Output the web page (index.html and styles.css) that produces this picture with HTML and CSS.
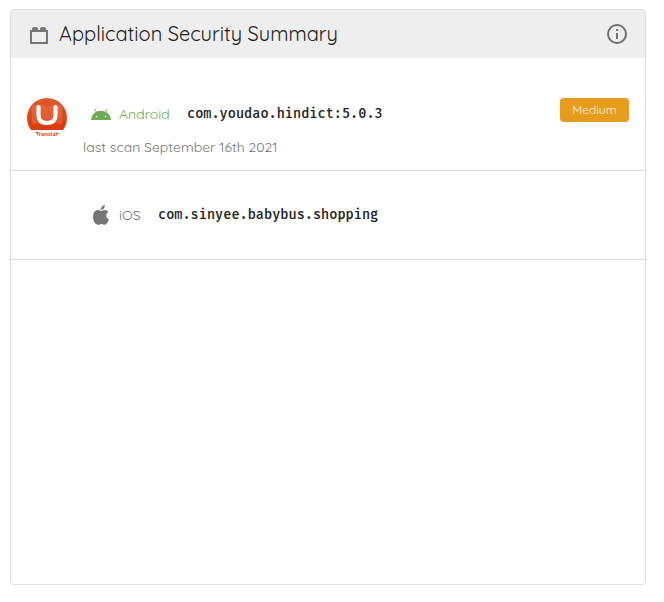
FILE: index.html
```html
<!DOCTYPE html>
<html lang="en">
<head>
<meta charset="utf-8">
<title>Application Security Summary</title>
<link rel="stylesheet" href="styles.css">
</head>
<body>
<main class="card">
  <header class="head">
    <svg class="head-icon" width="24" height="24" viewBox="0 0 24 24"><path fill="#757575" d="M19 6V5a2 2 0 0 0-2-2h-2a2 2 0 0 0-2 2v1h-2V5a2 2 0 0 0-2-2H7a2 2 0 0 0-2 2v1H3v14h18V6zm0 12H5V8h14z"/></svg>
    <h1 class="title"><span>Application Security Summary</span></h1>
    <svg class="info" width="24" height="24" viewBox="0 0 24 24"><path fill="#707070" d="M11 7h2v2h-2zm0 4h2v6h-2zm1-9a10 10 0 1 0 0 20 10 10 0 0 0 0-20zm0 18a8 8 0 1 1 0-16 8 8 0 0 1 0 16z"/></svg>
  </header>
  <section class="row scanned">
    <svg class="avatar" width="40" height="40" viewBox="0 0 40 40">
      <defs>
        <clipPath id="round"><circle cx="20" cy="20" r="20"/></clipPath>
        <linearGradient id="red" x1="0" y1="0" x2="0" y2="1"><stop offset="0" stop-color="#e0592a"/><stop offset="1" stop-color="#dc3a0b"/></linearGradient>
      </defs>
      <g clip-path="url(#round)">
        <path fill="url(#red)" d="M0 0h40v32H0z"/>
        <path fill="#f17c57" fill-opacity=".4" d="M5 8q8-3 15 1 7-4 15-1v18q-8-2-15 2-7-4-15-2z"/>
        <path fill="none" stroke="#fff" stroke-width="4.2" stroke-linecap="round" d="M11.500 9v8q0 8 8.500 8t8.500-8V9"/>
        <text class="logo-text" x="21.500" y="37.700" text-anchor="middle" textLength="26" lengthAdjust="spacingAndGlyphs">Translate</text>
      </g>
    </svg>
    <div class="details">
      <div class="app">
        <svg class="platform" width="20" height="20" viewBox="0 0 20 20"><path fill="#6fac54" d="M0 16c.3-3.700 2.100-6.500 5-8L3.300 5.200l.7-.4 1.800 2.900a11 11 0 0 1 8.400 0L16 4.800l.7.4L15 8c2.900 1.500 4.700 4.300 5 8z"/><g fill="#fff"><circle cx="5.500" cy="12.500" r=".8"/><circle cx="14.500" cy="12.500" r=".8"/></g></svg>
        <span class="name android">Android</span>
        <span class="package">com.youdao.hindict:5.0.3</span>
      </div>
      <div class="scan">last scan September 16th 2021</div>
    </div>
    <span class="badge">Medium</span>
  </section>
  <section class="row pending">
    <div class="details">
      <div class="app">
        <svg class="platform" width="20" height="20" viewBox="0 0 20 20"><path fill="#757575" d="M13.800 0c.2 2.800-1.500 4.800-4.100 4.900C9.600 2.500 11.400.4 13.800 0zM10.300 6c.9 0 2-1 3.600-1 1.500 0 2.800.8 3.500 1.900-3.200 2-2.700 6.100.6 7.300-.7 2-2.300 5.300-4.100 5.500-1.300.1-1.900-.8-3.500-.8s-2.200.8-3.500.8C4.400 19.800 2 15.800 2 11.700 2 7.300 4.300 5 6.900 5 8.400 5 9.300 6 10.300 6z"/></svg>
        <span class="name ios">iOS</span>
        <span class="package">com.sinyee.babybus.shopping</span>
      </div>
    </div>
  </section>
</main>
</body>
</html>
```
FILE: styles.css
```css
* { box-sizing: border-box; }
body {
  margin: 0;
  padding: 9px 18px 17px 10px;
  background: #fff;
  font-family: Quicksand, Lato, sans-serif;
}
.card {
  width: 636px;
  height: 576px;
  border: 1px solid #dedede;
  border-radius: 4px;
  overflow: hidden;
}
.head {
  display: flex;
  align-items: center;
  height: 48px;
  padding: 0 16px;
  background: #eee;
}
.head-icon { margin-top: 4px; }
.title {
  flex: 1;
  margin: 0 0 0 8px;
  color: #212121;
  font-size: 20px;
  line-height: 28px;
  font-weight: 400;
}
.row {
  display: flex;
  border-bottom: 1px solid #dedede;
}
.scanned { height: 113px; padding: 40px 16px 0; }
.pending { height: 89px; padding: 32px 16px 0 72px; }
.avatar { margin-right: 16px; }
.details { flex: 1; }
.app {
  display: flex;
  align-items: center;
  height: 32px;
  padding-left: 8px;
}
.pending .app { height: 24px; }
.scanned .app { padding-bottom: 1px; }
.name {
  margin-left: 8px;
  font-size: 14px;
  line-height: 20px;
}
.android { width: 51px; color: #6fac54; }
.ios { width: 22px; color: #757575; }
.package {
  margin-left: 17px;
  color: #212121;
  font: 500 13.6px/20px "Fira Mono", "Fira Code", "DejaVu Sans Mono", monospace;
  white-space: nowrap;
}
.scan {
  margin-top: 7px;
  color: #757575;
  font-size: 14px;
  line-height: 20px;
}
.badge {
  width: 69px;
  height: 24px;
  border-radius: 4px;
  background: #e79c1e;
  color: #fff5e4;
  font-size: 12px;
  line-height: 24px;
  text-align: center;
}
.logo-text {
  fill: #dc3a20;
  font: 700 5.500px Lato, sans-serif;
}
```
